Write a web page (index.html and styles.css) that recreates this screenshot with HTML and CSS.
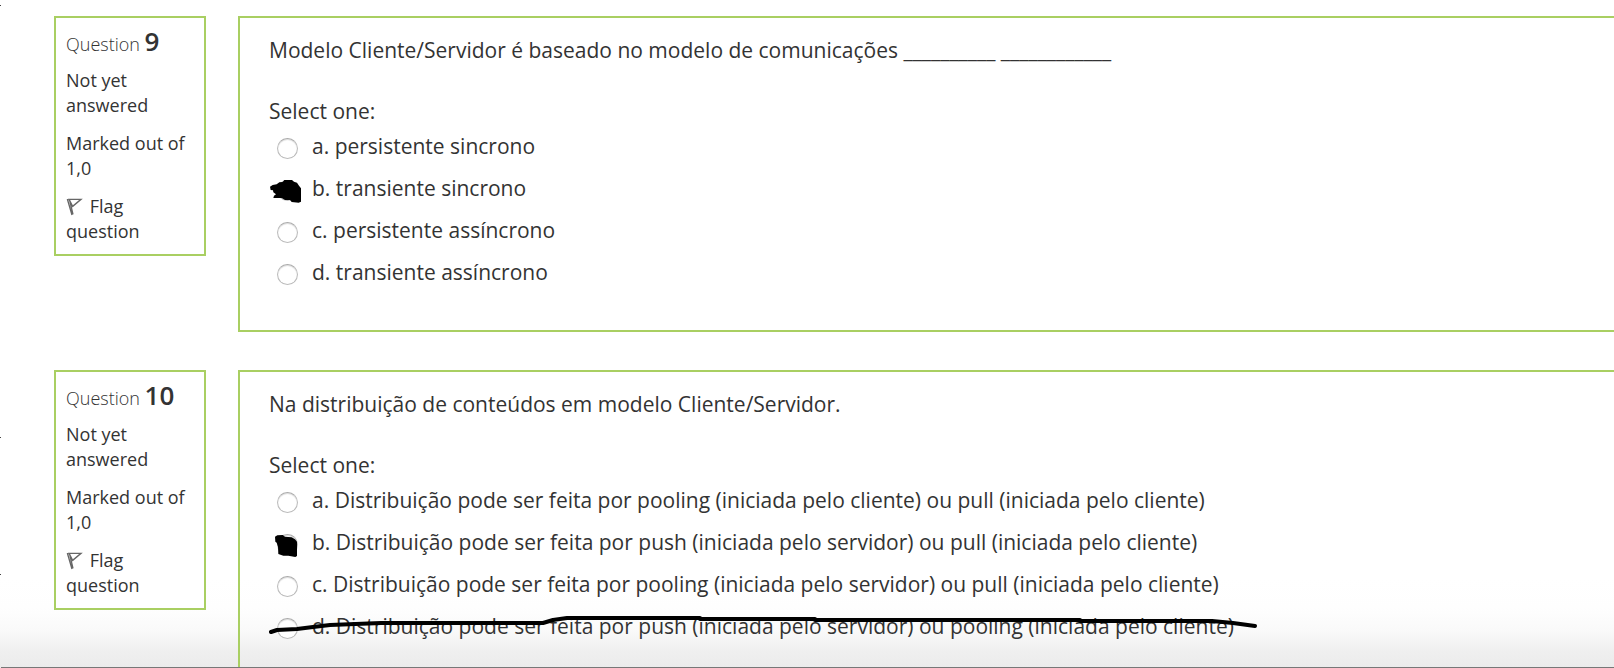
FILE: index.html
```html
<!DOCTYPE html>
<html lang="pt">
<head>
<meta charset="utf-8">
<title>Quiz</title>
<link rel="stylesheet" href="styles.css">
</head>
<body>
<main class="page">
  <span class="edge-mark edge-mark-top"></span>
  <span class="edge-mark edge-mark-middle"></span>
  <span class="edge-mark edge-mark-low"></span>

  <section class="question">
    <aside class="info">
      <h2 class="info-title">Question <span class="info-number">9</span></h2>
      <p class="info-line">Not yet answered</p>
      <p class="info-line">Marked out of 1,0</p>
      <p class="info-line"><a class="flag" href="#flag-9"><svg class="flag-icon" viewBox="0 0 54 57"><path d="M4 6 18 54M10 6 21 52M9 7H45L20 28Z"/></svg> Flag question</a></p>
    </aside>
    <fieldset class="content">
      <p class="prompt">Modelo Cliente/Servidor é baseado no modelo de comunicações __________ ____________</p>
      <p class="select-one">Select one:</p>
      <div class="answers">
        <label class="answer"><input class="radio" type="radio" name="q9"><span>a. persistente sincrono</span></label>
        <label class="answer"><input class="radio" type="radio" name="q9"><span>b. transiente sincrono</span>
          <svg class="ink ink-wide" viewBox="0 0 108 78"><path d="M3 23 11 18 23 16 31 10 41 9 46 3H69L75 8 84 11 90 20 96 28V68L89 71 68 69 63 63H48L38 57H13L15 50 21 46 13 40 12 34 5 33Z"/></svg></label>
        <label class="answer"><input class="radio" type="radio" name="q9"><span>c. persistente assíncrono</span></label>
        <label class="answer"><input class="radio" type="radio" name="q9"><span>d. transiente assíncrono</span></label>
      </div>
    </fieldset>
  </section>

  <section class="question">
    <aside class="info">
      <h2 class="info-title">Question <span class="info-number">10</span></h2>
      <p class="info-line">Not yet answered</p>
      <p class="info-line">Marked out of 1,0</p>
      <p class="info-line"><a class="flag" href="#flag-10"><svg class="flag-icon" viewBox="0 0 54 57"><path d="M4 6 18 54M10 6 21 52M9 7H45L20 28Z"/></svg> Flag question</a></p>
    </aside>
    <fieldset class="content">
      <p class="prompt">Na distribuição de conteúdos em modelo Cliente/Servidor.</p>
      <p class="select-one">Select one:</p>
      <div class="answers">
        <label class="answer"><input class="radio" type="radio" name="q10"><span>a. Distribuição pode ser feita por pooling (iniciada pelo cliente) ou pull (iniciada pelo cliente)</span></label>
        <label class="answer"><input class="radio" type="radio" name="q10"><span>b. Distribuição pode ser feita por push (iniciada pelo servidor) ou pull (iniciada pelo cliente)</span>
          <svg class="ink ink-square" viewBox="0 0 75 78"><path d="M3 11 10 7 26 6 33 11 53 13 63 19 69 26V69L64 72 43 68H28L13 63 12 41 8 29 4 26Z"/></svg></label>
        <label class="answer"><input class="radio" type="radio" name="q10"><span>c. Distribuição pode ser feita por pooling (iniciada pelo servidor) ou pull (iniciada pelo cliente)</span></label>
        <label class="answer"><input class="radio" type="radio" name="q10"><span>d. Distribuição pode ser feita por push (iniciada pelo servidor) ou pooling (iniciada pelo cliente)</span>
          <svg class="ink ink-strike" viewBox="0 0 990 26"><path d="M2 20 8 18 28 17 44 15 61 13 112 11H274L284 8 298 6H431V7H546V8H811V9H943L964 11 986 14"/></svg></label>
      </div>
    </fieldset>
  </section>
</main>
</body>
</html>
```
FILE: styles.css
```css
* {
  box-sizing: border-box;
}

body {
  margin: 0;
  font-family: "Open Sans", "Noto Sans", sans-serif;
  color: #333;
}

.page {
  position: relative;
  height: 100vh;
  overflow: hidden;
  display: flex;
  flex-direction: column;
  gap: 38px;
  padding: 16px 0 0 54px;
  background: linear-gradient(to top, #ebebeb 0, #efefef 16px, #f9f9f9 36px, #fefefe 60px, #fff 90px);
}

.page::after {
  content: "";
  position: absolute;
  left: 1px;
  right: 0;
  bottom: 0;
  height: 1px;
  background: #777;
}

.edge-mark {
  position: absolute;
  left: 0;
  width: 1px;
  height: 1px;
  background: #444;
}

.edge-mark-top { top: 5px; }
.edge-mark-middle { top: 437px; }
.edge-mark-low { top: 574px; }

.question {
  flex: none;
  display: flex;
  align-items: flex-start;
  gap: 32px;
}

.info {
  flex: none;
  width: 152px;
  padding: 8px 10px 10px;
  border: 2px solid #a9cf62;
  background: #fff;
  font-size: 18px;
  line-height: 25px;
}

.info-title {
  margin: 0 0 9px;
  font-size: 18px;
  font-weight: 300;
  line-height: 30px;
}

.info-number {
  font-size: 26px;
  font-weight: 600;
  line-height: 30px;
}

.info-line {
  margin: 0 0 13px;
}

.info-line:last-child {
  margin-bottom: 0;
}

.flag {
  color: inherit;
  text-decoration: none;
}

.flag-icon {
  width: 18px;
  height: 19px;
  margin-right: 1px;
  vertical-align: -3px;
  fill: none;
  stroke: #666;
  stroke-width: 4;
}

.content {
  flex: 1;
  min-width: 0;
  margin: 0;
  padding: 16px 0 42px 29px;
  border: 2px solid #a9cf62;
  border-right: 0;
  font-size: 21px;
  line-height: 32px;
}

.prompt {
  margin: 0 0 29px;
}

.select-one {
  margin: 0 0 3px;
}

.answers {
  display: flex;
  flex-direction: column;
  gap: 10px;
}

.answer {
  position: relative;
  display: flex;
  align-items: flex-start;
  gap: 14px;
}

.radio {
  appearance: none;
  flex: none;
  width: 21px;
  height: 21px;
  margin: 8px 0 0 8px;
  border: 1px solid #bbb;
  border-top-color: #aaa;
  border-radius: 50%;
  background: #fff;
  box-shadow: inset 0 1px 1px #ddd;
}

.ink {
  position: absolute;
  fill: #000;
}

.ink-wide {
  left: 0;
  top: 7px;
  width: 36px;
  height: 26px;
}

.ink-square {
  left: 5px;
  top: 7px;
  width: 25px;
  height: 26px;
}

.ink-strike {
  left: 0;
  top: 2px;
  width: 990px;
  height: 26px;
  fill: none;
  stroke: #000;
  stroke-width: 4;
  stroke-linejoin: round;
  stroke-linecap: round;
}
```
